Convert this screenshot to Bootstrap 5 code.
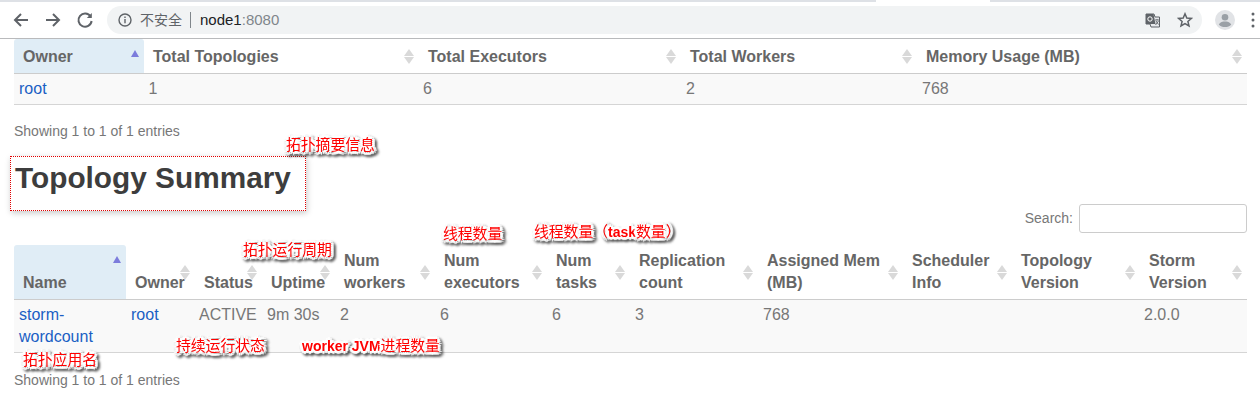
<!DOCTYPE html>
<html lang="zh-CN">
<head>
<meta charset="utf-8">
<title>Storm UI</title>
<link href="https://cdn.jsdelivr.net/npm/bootstrap@5.3.0/dist/css/bootstrap.min.css" rel="stylesheet">
<style>
html,body{height:405px;overflow:hidden;background:#fff}
body{font-family:"Liberation Sans","Noto Sans CJK SC",sans-serif;font-size:16px;color:#777;position:relative}
.tabstrip{height:2px;background:#dee1e6}
.tabstrip-active{width:114px;margin-left:876px;height:2px;background:#fff}
.toolbar{height:37px;background:#fff;border-bottom:1px solid #b9babc;padding-left:12px;padding-top:4px}
.tool-ic{width:18px;height:18px;margin-right:14px;margin-top:5px;flex:none}
.addr{width:1095px;height:28px;margin-left:-1px;border-radius:14px;background:#f1f3f4;font-size:14px;color:#5f6368;padding-left:11px;flex:none}
.addr-sep{width:1px;height:16px;background:#80868b;margin:0 9px 0 8px}
.addr-host{color:#202124;font-size:15px}
.addr-port{color:#80868b;font-size:15px}
.addr-end{margin-left:auto;padding-right:9px;gap:17px}
.avatar{width:20px;height:20px;margin-left:13px;margin-top:4px;flex:none}
.dots{width:4px;margin-left:16px;margin-top:4px;flex:none}
.pagewrap{padding:0 13px 0 14px}
.dtable{table-layout:fixed;width:1233px;margin:0;color:#777;font-size:16px;line-height:22px}
.dtable>thead>tr>th{position:relative;color:#666;font-weight:700;padding:5px 18px 5px 9px;border-bottom:1px solid #ccc;vertical-align:bottom;background:#fff;box-shadow:none}
.dtable>tbody>tr>td{padding:4px 5px;border-bottom:1px solid #d5d5d5;background:#f9f9f9;box-shadow:none;color:#777;vertical-align:top}
.dtable a{color:#1a5fc4;text-decoration:none}
.dtable>thead>tr>th::before,.dtable>thead>tr>th::after{content:"";position:absolute;right:5px;width:0;height:0;border-left:5px solid transparent;border-right:5px solid transparent}
.dtable>thead>tr>th::before{top:calc(50% - 7px);border-bottom:7px solid #d9d9d9}
.dtable>thead>tr>th::after{top:calc(50% + 1px);border-top:7px solid #d9d9d9}
.dtable>thead>tr>th.sorted{background:#e0edf6;border-radius:3px 3px 0 0}
.dtable>thead>tr>th.sorted::after{display:none}
.dtable>thead>tr>th.sorted::before{top:11px;right:5px;border-left-width:4px;border-right-width:4px;border-bottom:7px solid #7c7cdc}
.t1 th{height:34px}
.t1 td{height:31px}
.dtable.t1>tbody>tr>td:nth-child(2){padding-left:4.5px}
.dtable.t1>tbody>tr>td:nth-child(3){padding-left:4px}
.c1a{width:130px}.c1b{width:275px}.c1c{width:262px}.c1d{width:236px}.c1e{width:330px}
.c2a{width:112px}.c2b{width:69px}.c2c{width:67px}.c2d{width:73px}.c2e{width:100px}.c2f{width:112px}.c2g{width:83px}.c2h{width:128px}.c2i{width:145px}.c2j{width:109px}.c2k{width:128px}.c2l{width:107px}
.t2 td{height:53px}
.dtable.t2>tbody>tr>td:nth-child(3),.dtable.t2>tbody>tr>td:nth-child(12){padding-left:4px}
.infoline{font-size:14px;line-height:18px;color:#777}
.info1{margin-top:17px}
.headbox{width:296px;height:55px;margin:16px 0 0 -4px;padding:3px 4px;border:1px dotted #e00000;box-shadow:1px 2px 6px rgba(0,0,0,.22);background:#fff}
.headbox h1{font-family:"Liberation Sans",sans-serif;font-size:29.8px;line-height:36px;font-weight:700;color:#3d3d3d;margin:0;white-space:nowrap}
.searchrow{margin-top:-7px;height:41px;font-size:14px;color:#777;align-items:flex-start}
.searchrow input{width:168px;height:29px;border:1px solid #ccc;border-radius:3px;margin-left:6px;background:#fff}
.searchrow label{line-height:29px}
.info2{margin-top:18px}
.note{position:absolute;white-space:nowrap;color:#f00;font-size:14.8px;line-height:18px;font-family:"Noto Sans CJK SC","Liberation Sans",sans-serif;text-shadow:2px 0 1px #fff,-2px 0 1px #fff,0 2px 1px #fff,0 -2px 1px #fff,2px 2px 1px #fff,-2px 2px 1px #fff,2px -2px 1px #fff,-2px -2px 1px #fff,3px 0 1px #fff,-3px 0 1px #fff,0 3px 1px #fff,0 -3px 1px #fff;filter:drop-shadow(2px 2px 1px rgba(40,40,40,.85))}
.note b{font-family:"Liberation Sans",sans-serif;font-size:14px;font-weight:700}
.n1{left:286px;top:135px}
.n2{left:243px;top:240px}
.n3{left:443px;top:224px}
.n4{left:534px;top:222px}
.n5{left:176px;top:336px}
.n6{left:302px;top:336px}
.n7{left:23px;top:350px}
</style>
</head>
<body>
<div class="tabstrip"><div class="tabstrip-active"></div></div>
<div class="toolbar d-flex align-items-start">
  <svg class="tool-ic" viewBox="0 0 18 18" fill="none" stroke="#5f6368" stroke-width="2"><path d="M16 9H3M9 3 3 9l6 6"/></svg>
  <svg class="tool-ic" viewBox="0 0 18 18" fill="none" stroke="#5f6368" stroke-width="2"><path d="M2 9h13M9 3l6 6-6 6"/></svg>
  <svg class="tool-ic" viewBox="0 0 18 18" fill="none" stroke="#5f6368" stroke-width="2"><path d="M14.6 5.5A6.6 6.6 0 1 0 15.6 10"/><path d="M15.8 2v5h-5" fill="#5f6368" stroke="none"/></svg>
  <div class="addr d-flex align-items-center">
    <svg width="14" height="14" viewBox="0 0 14 14" fill="none" stroke="#5f6368" stroke-width="1.4" class="me-2"><circle cx="7" cy="7" r="6"/><path d="M7 6v4.2M7 3.4v1.5"/></svg>
    <span>不安全</span><span class="addr-sep"></span><span class="addr-host">node1</span><span class="addr-port">:8080</span>
    <div class="addr-end d-flex align-items-center">
      <svg width="15" height="15" viewBox="0 0 15 15"><path d="M1 1h8l1 3h4.500v10H6l-1-3H1z" fill="#e8eaed" stroke="#5f6368"/><path d="M1 1h7.500l2 10H1z" fill="#5f6368"/><circle cx="5" cy="6" r="2.200" fill="none" stroke="#fff"/><path d="M10 7h4M12 6v1M10.500 12l3-4M11 8l2.500 3.500" stroke="#5f6368" fill="none" stroke-width=".9"/></svg>
      <svg width="16" height="16" viewBox="0 0 16 16" fill="none" stroke="#5f6368" stroke-width="1.500"><path d="M8 1.800 9.800 6l4.600.4-3.500 3 1.100 4.500L8 11.500 4 13.900l1.100-4.500-3.500-3L6.200 6z"/></svg>
    </div>
  </div>
  <svg class="avatar" viewBox="0 0 20 20"><circle cx="10" cy="10" r="10" fill="#e1e3e6"/><circle cx="10" cy="7.300" r="3.300" fill="#9aa0a6"/><path d="M3.800 14.500C5 12 8 11.500 10 11.500s5 .5 6.200 3c-1.500 2-3.800 2.600-6.200 2.600s-4.700-.6-6.200-2.600z" fill="#9aa0a6"/></svg>
  <svg class="dots" height="20" viewBox="0 0 4 20" fill="#5f6368"><circle cx="2" cy="4" r="1.500"/><circle cx="2" cy="10" r="1.500"/><circle cx="2" cy="16" r="1.500"/></svg>
</div>

<div class="pagewrap">
  <table class="table dtable t1">
    <colgroup><col class="c1a"><col class="c1b"><col class="c1c"><col class="c1d"><col class="c1e"></colgroup>
    <thead><tr><th class="sorted">Owner</th><th>Total Topologies</th><th>Total Executors</th><th>Total Workers</th><th>Memory Usage (MB)</th></tr></thead>
    <tbody><tr><td><a href="#">root</a></td><td>1</td><td>6</td><td>2</td><td>768</td></tr></tbody>
  </table>
  <div class="infoline info1">Showing 1 to 1 of 1 entries</div>

  <div class="headbox"><h1>Topology Summary</h1></div>

  <div class="searchrow d-flex justify-content-end"><label for="q">Search:</label><input id="q" type="text"></div>

  <table class="table dtable t2">
    <colgroup><col class="c2a"><col class="c2b"><col class="c2c"><col class="c2d"><col class="c2e"><col class="c2f"><col class="c2g"><col class="c2h"><col class="c2i"><col class="c2j"><col class="c2k"><col class="c2l"></colgroup>
    <thead><tr><th class="sorted">Name</th><th>Owner</th><th>Status</th><th>Uptime</th><th>Num workers</th><th>Num executors</th><th>Num tasks</th><th>Replication count</th><th>Assigned Mem (MB)</th><th>Scheduler Info</th><th>Topology Version</th><th>Storm Version</th></tr></thead>
    <tbody><tr><td><a href="#">storm-wordcount</a></td><td><a href="#">root</a></td><td>ACTIVE</td><td>9m 30s</td><td>2</td><td>6</td><td>6</td><td>3</td><td>768</td><td></td><td></td><td>2.0.0</td></tr></tbody>
  </table>
  <div class="infoline info2">Showing 1 to 1 of 1 entries</div>
</div>

<span class="note n1">拓扑摘要信息</span>
<span class="note n2">拓扑运行周期</span>
<span class="note n3">线程数量</span>
<span class="note n4">线程数量（<b>task</b>数量）</span>
<span class="note n5">持续运行状态</span>
<span class="note n6"><b>worker JVM</b>进程数量</span>
<span class="note n7">拓扑应用名</span>
<script src="https://cdn.jsdelivr.net/npm/bootstrap@5.3.0/dist/js/bootstrap.bundle.min.js"></script>
</body>
</html>
